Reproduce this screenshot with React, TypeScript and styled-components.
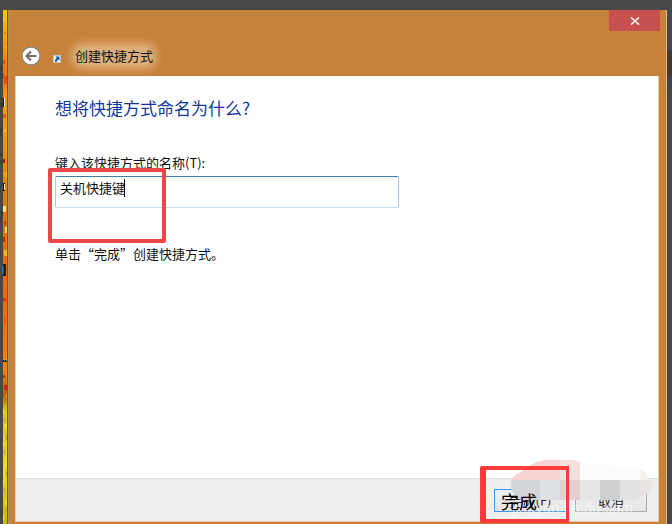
import React from "react";
import styled, { createGlobalStyle } from "styled-components";

const GlobalStyle = createGlobalStyle`
  * { box-sizing: border-box; }
  body {
    margin: 0;
    background: #484848;
    color: #111;
    font: 13px/18px "Noto Sans CJK SC", sans-serif;
  }
`;

const Desktop = styled.div`
  display: grid;
  grid-template-columns: 8px minmax(0, 1fr) 5px;
  height: 100vh;
  padding-top: 10px;
  overflow: hidden;
`;

const Wallpaper = styled.svg`
  display: block;
  width: 8px;
  height: 100%;
`;

const DesktopEdge = styled.div`
  background: linear-gradient(#484848 40px, #44382f 41px, #44382f 66px, #424448 67px, #484848 90px);
`;

const Dialog = styled.section`
  display: flex;
  flex-direction: column;
  min-width: 0;
  background: #c78239;
  border-left: 2px solid #b58a5b;
  border-right: 1px solid #dfb98b;
  padding: 0 7px 2px 5px;
`;

const TitleBar = styled.header`
  display: flex;
  flex-direction: column;
  height: 66px;
`;

const CloseButton = styled.button`
  display: grid;
  place-items: center;
  align-self: flex-end;
  width: 51px;
  height: 21px;
  margin-right: -1px;
  padding: 0;
  border: 0;
  background: #c75050;
`;

const TitleRow = styled.div`
  display: flex;
  align-items: center;
  height: 30px;
  margin-top: 10px;
  padding-left: 6px;
`;

const BackButton = styled.button`
  display: grid;
  width: 20px;
  height: 20px;
  padding: 0;
  border: 0;
  background: none;
`;

const ShortcutIcon = styled.svg`
  margin: 6px 14px 0 12px;
`;

const Title = styled.h1`
  margin: 0;
  font-size: 13px;
  font-weight: 400;
  line-height: 18px;
  background: rgba(255, 240, 222, 0.4);
  box-shadow: 0 0 8px 4px rgba(255, 240, 222, 0.4);
  border-radius: 8px;
`;

const Body = styled.main`
  flex: 1;
  display: flex;
  flex-direction: column;
  min-height: 0;
  background: #fff;
  border: 1px solid #ecc9a2;
  border-top: 0;
`;

const Page = styled.form`
  flex: 1;
  display: flex;
  flex-direction: column;
  align-items: flex-start;
  padding: 20px 39px 0;
`;

const Question = styled.h2`
  margin: 0 0 34px;
  color: #12389c;
  font-size: 17px;
  font-weight: 400;
  line-height: 24px;
`;

const Field = styled.div`
  position: relative;
  width: 100%;
  max-width: 344px;
  margin: 4px 0 37px;
`;

const NameInput = styled.input`
  display: block;
  width: 100%;
  height: 32px;
  padding: 0 4px 10px;
  border: 1px solid #9dcbea;
  border-top-color: #3b7fb4;
  border-bottom-color: #c4e0f2;
  border-radius: 2px;
  outline: 0;
  background: #fff;
  color: #111;
  font: inherit;
`;

const Caret = styled.span`
  position: absolute;
  left: 69px;
  top: 3px;
  width: 1px;
  height: 18px;
  background: #000;
`;

const NameMark = styled.span`
  position: absolute;
  left: -7px;
  top: -8px;
  width: 118px;
  height: 75px;
  border: 4px solid #ee4748;
  border-radius: 2px;
`;

const Hint = styled.p`
  margin: 0;
`;

const Footer = styled.footer`
  display: flex;
  justify-content: flex-end;
  height: 43px;
  padding: 10px 11px 0;
  background: #efefef;
  border-top: 1px solid #e0e0e0;
`;

const Actions = styled.div`
  position: relative;
  display: flex;
  gap: 8px;
`;

const ActionButton = styled.button<{ $primary?: boolean }>`
  width: ${(p) => (p.$primary ? "73px" : "72px")};
  height: 23px;
  padding: 0;
  border: 1px solid ${(p) => (p.$primary ? "#3e96ea" : "#acacac")};
  background: linear-gradient(#f0f0f0, #e5e5e5);
  color: #222;
  font: inherit;
  line-height: 20px;
`;

const Smudge = styled.svg`
  position: absolute;
  left: 17px;
  top: -29px;
`;

const Enlarged = styled.span`
  position: absolute;
  left: 7px;
  top: 0;
  color: #000;
  font-size: 18px;
  line-height: 24px;
`;

const Watermark = styled.span`
  position: absolute;
  left: 18px;
  top: 10px;
  color: rgba(255, 255, 255, 0.6);
  font: 15px/18px "Liberation Sans", sans-serif;
`;

const FinishMark = styled.span`
  position: absolute;
  left: -14px;
  top: -23px;
  width: 89px;
  height: 57px;
  border: solid #fb3b3c;
  border-width: 4px 3px 4px 6px;
  border-radius: 2px 0 0 2px;
`;

const flecks = [
  [8, 3, "#fc0"], [22, 2, "#f47a10"], [36, 3, "#ffb000"], [50, 4, "#e84b08"],
  [66, 8, "#e0500a"], [82, 3, "#ff9a12"], [104, 4, "#ed5a0a"], [119, 3, "#ffc229"],
  [134, 6, "#e89a10"], [149, 4, "#a51d05"], [162, 5, "#f6a414"], [188, 5, "#d37d16"],
  [196, 6, "#f5e28a"], [211, 4, "#ca3a0a"], [217, 6, "#ffe07a"], [227, 5, "#b72707"],
  [240, 6, "#fbb425"], [275, 5, "#e07916"], [288, 3, "#d82f06"], [306, 9, "#f05d06"],
  [331, 10, "#fa7a08"], [365, 3, "#a04708"], [375, 5, "#bc2d0c"], [384, 4, "#d47f10"],
] as const;

const grains = [399, 408, 414, 425, 431, 440, 452, 461, 469, 478, 490, 497, 505];

function WallpaperStrip() {
  return (
    <Wallpaper viewBox="0 0 8 514" preserveAspectRatio="none" aria-hidden="true">
      <defs>
        <linearGradient id="autumn" x1="0" y1="0" x2="0" y2="1">
          <stop offset="0" stopColor="#f5c500" />
          <stop offset=".12" stopColor="#f07a0c" />
          <stop offset=".2" stopColor="#f3a010" />
          <stop offset=".4" stopColor="#d9780f" />
          <stop offset=".56" stopColor="#ed6a08" />
          <stop offset=".7" stopColor="#f08608" />
          <stop offset=".75" stopColor="#b95f09" />
          <stop offset=".78" stopColor="#d7cf12" />
          <stop offset=".9" stopColor="#ead821" />
          <stop offset="1" stopColor="#c5bb07" />
        </linearGradient>
      </defs>
      <rect width="3" height="514" fill="#484848" />
      <rect x="3" width="5" height="514" fill="url(#autumn)" />
      {flecks.map(([y, h, fill], i) => (
        <rect key={y} x={3 + (i % 3)} y={y} width={i % 2 ? 2 : 3} height={h} fill={fill} />
      ))}
      {grains.map((y, i) => (
        <rect key={y} x={3 + (i % 4)} y={y} width="1" height="5" fill={i % 2 ? "#b2ae0c" : "#f3e94a"} />
      ))}
      <path d="M3 88h1.500v9H3M3 173h2v8H3M3 254h3v12H3M3 350h4v2H3" fill="#211b12" />
      <path d="M4.500 88v9M4.500 174v6M4 350h1M6 350h1" stroke="#e8e4c0" strokeWidth="1" />
      <path d="M3 256v8" stroke="#3b88c8" />
      <path d="M0 57h3M0 60h3M0 64h3v4H0M0 88h2v10M0 119h3M1 119v7M0 145h3M0 153l3-3M0 202h3l-3 10" fill="none" stroke="#292929" strokeWidth=".7" />
      <rect x="7" width="1" height="514" fill="#795125" />
    </Wallpaper>
  );
}

export default function App() {
  return (
    <>
      <GlobalStyle />
      <Desktop>
        <WallpaperStrip />
        <Dialog aria-labelledby="dialog-title">
          <TitleBar>
            <CloseButton type="button" aria-label="关闭">
              <svg width="10" height="8" viewBox="0 0 10 8" aria-hidden="true">
                <path d="M1 .4l8 7.200M9 .4l-8 7.200" stroke="#f8eaea" strokeWidth="1.700" />
              </svg>
            </CloseButton>
            <TitleRow>
              <BackButton type="button" aria-label="返回">
                <svg width="20" height="20" viewBox="0 0 20 20" aria-hidden="true">
                  <circle cx="10" cy="10" r="9" fill="#fff" stroke="#8b8782" strokeWidth="1.300" />
                  <path d="M15.500 10H6M10 5.500L5.500 10l4.500 4.500" fill="none" stroke="#77736f" strokeWidth="2.200" />
                </svg>
              </BackButton>
              <ShortcutIcon width="8" height="8" viewBox="0 0 8 8" aria-hidden="true">
                <rect x=".5" y=".5" width="7" height="7" fill="#eef4fa" stroke="#b9c5d0" />
                <path d="M2.500 1.500h4v4L5.300 4.400Q3.500 5 3.700 7H2Q1.500 4.500 3.800 3z" fill="#1557a5" />
              </ShortcutIcon>
              <Title id="dialog-title">创建快捷方式</Title>
            </TitleRow>
          </TitleBar>
          <Body>
            <Page id="shortcut-form" onSubmit={(e) => e.preventDefault()}>
              <Question>想将快捷方式命名为什么?</Question>
              <label htmlFor="shortcut-name">键入该快捷方式的名称(T):</label>
              <Field>
                <NameInput id="shortcut-name" type="text" defaultValue="关机快捷键" />
                <Caret />
                <NameMark />
              </Field>
              <Hint>单击“完成”创建快捷方式。</Hint>
            </Page>
            <Footer>
              <Actions>
                <ActionButton $primary type="submit" form="shortcut-form">完成(F)</ActionButton>
                <ActionButton type="button">取消</ActionButton>
                <Smudge width="142" height="40" viewBox="0 0 142 40" aria-hidden="true">
                  <defs>
                    <clipPath id="blob">
                      <path d="M0 24Q0 15 10 12L20 5Q28 0 37 0H62Q70 3 80 3Q102 5 112 8L129 9Q136 12 139 20L142 23Q142 33 130 36L126 40H12Q0 36 0 24z" />
                    </clipPath>
                  </defs>
                  <g clipPath="url(#blob)">
                    <rect width="49" height="20" fill="#f6d4d4" />
                    <rect x="49" width="20" height="20" fill="#f2e1e1" />
                    <rect x="69" width="60" height="20" fill="#fbfbfb" />
                    <rect x="129" width="13" height="20" fill="#f7f1eb" />
                    <rect y="20" width="9" height="20" fill="#ced6da" />
                    <rect x="9" y="20" width="20" height="20" fill="#d1d6d9" />
                    <rect x="29" y="20" width="20" height="20" fill="#dde0e5" />
                    <rect x="49" y="20" width="20" height="20" fill="#e3cfd0" />
                    <rect x="69" y="20" width="20" height="20" fill="#e6e6e4" />
                    <rect x="89" y="20" width="20" height="20" fill="#cfcfcf" />
                    <rect x="109" y="20" width="20" height="20" fill="#e2e2e1" />
                    <rect x="129" y="20" width="13" height="20" fill="#e9e3df" />
                  </g>
                </Smudge>
                <Watermark>jingyan.baidu.com</Watermark>
                <Enlarged>完成</Enlarged>
                <FinishMark />
              </Actions>
            </Footer>
          </Body>
        </Dialog>
        <DesktopEdge />
      </Desktop>
    </>
  );
}
